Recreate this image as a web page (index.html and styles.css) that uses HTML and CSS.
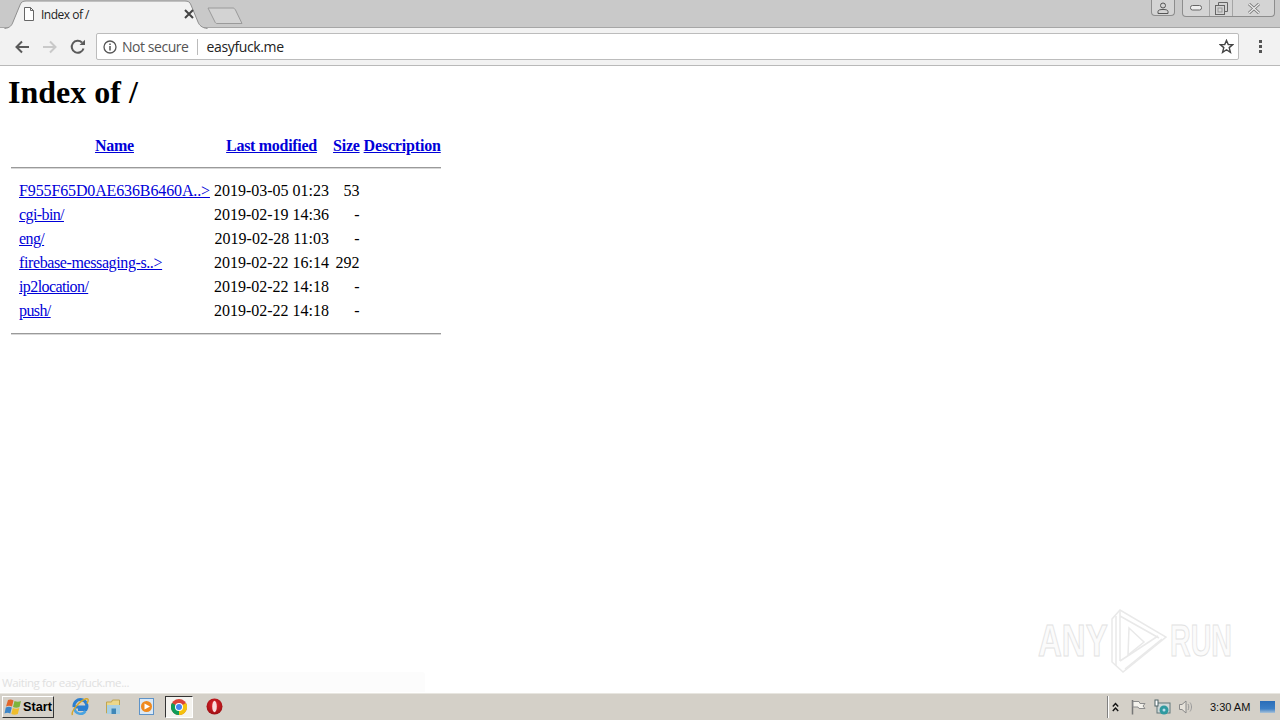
FILE: index.html
```html
<!DOCTYPE html>
<html lang="en">
<head>
<meta charset="utf-8">
<title>Index of /</title>
<link rel="stylesheet" href="styles.css">
</head>
<body>
<div class="window">
  <header class="tabstrip">
    <div class="tab">
      <svg class="tab-shape" width="204" height="29" viewBox="0 0 204 29"><path d="M0.5 28.500C6 28 8 25 9 22L16 5C17 2 19 1 22 1H181C184 1 186 2 187 5L194 22C195 25 198 28 203.500 28.500" fill="#f2f2f2" stroke="#8f8f8f"/></svg>
      <svg class="tab-favicon" width="12" height="14" viewBox="0 0 12 14"><path d="M1.500 .5H7.500L10.500 3.500V13.500H1.500ZM7.500 .5V3.500H10.500" fill="#fff" stroke="#666"/></svg>
      <span class="tab-title">Index of /</span>
      <svg class="tab-close" width="10" height="10" viewBox="0 0 10 10"><path d="M1 1L9 9M9 1L1 9" stroke="#444" stroke-width="2"/></svg>
    </div>
    <svg class="newtab" width="36" height="18" viewBox="0 0 36 18"><path d="M1 1H26C27 1 28 2 28.500 3L35 16.500H10C9 16.500 8.500 16 8 15Z" fill="#d3d3d3" stroke="#9a9a9a"/></svg>
    <div class="controls">
      <div class="ctl ctl-user"><svg width="12" height="12" viewBox="0 0 12 12"><circle cx="6" cy="3.500" r="2.500" fill="none" stroke="#555"/><path d="M1 11.500V9.500C1 8 3 7.500 6 7.500S11 8 11 9.500V11.500Z" fill="none" stroke="#555"/></svg></div>
      <div class="ctl-group">
        <div class="ctl ctl-min"><svg width="12" height="6" viewBox="0 0 12 6"><rect x=".5" y=".5" width="11" height="4.500" rx="2" fill="#eee" stroke="#666"/></svg></div>
        <div class="ctl ctl-max"><svg width="13" height="13" viewBox="0 0 13 13"><path d="M3.500 3V.5H12.500V9.500H10" fill="none" stroke="#666"/><rect x=".5" y="3.500" width="9" height="9" fill="none" stroke="#666"/><rect x="3" y="6" width="4" height="4" fill="none" stroke="#999"/></svg></div>
        <div class="ctl ctl-close"><svg width="14" height="11" viewBox="0 0 14 11"><path d="M2 1L12 10M12 1L2 10" stroke="#777" stroke-width="3"/><path d="M2 1L12 10M12 1L2 10" stroke="#eee" stroke-width="1.200"/></svg></div>
      </div>
    </div>
  </header>

  <nav class="toolbar">
    <svg class="nav-ico" width="16" height="14" viewBox="0 0 16 14"><path d="M15 7H3M8 1.500L2.500 7L8 12.500" fill="none" stroke="#5a5a5a" stroke-width="2"/></svg>
    <svg class="nav-ico nav-fwd" width="16" height="14" viewBox="0 0 16 14"><path d="M1 7H13M8 1.500L13.500 7L8 12.500" fill="none" stroke="#c9c9c9" stroke-width="2"/></svg>
    <svg class="nav-ico nav-reload" width="16" height="16" viewBox="0 0 16 16"><path d="M13.500 9.500A6 6 0 1 1 12 3.500" fill="none" stroke="#5a5a5a" stroke-width="2"/><path d="M9.500 6H15V.8Z" fill="#5a5a5a"/></svg>
    <div class="omnibox">
      <svg class="info" width="14" height="14" viewBox="0 0 14 14"><circle cx="7" cy="7" r="6" fill="none" stroke="#555" stroke-width="1.300"/><path d="M7 6V10.500M7 3.400V5" stroke="#555" stroke-width="1.500"/></svg>
      <span class="secure">Not secure</span>
      <span class="omni-sep"></span>
      <span class="url">easyfuck.me</span>
      <svg class="star" width="15" height="15" viewBox="0 0 16 16"><path d="M8 1.500L9.900 6H14.800L10.900 9.200L12.200 14.200L8 11.500L3.800 14.200L5.100 9.200L1.200 6H6.100Z" fill="none" stroke="#444" stroke-width="1.500"/></svg>
    </div>
    <div class="menu"><i></i><i></i><i></i></div>
  </nav>

  <main class="page">
    <h1>Index of /</h1>
    <table class="listing">
      <tr class="row head"><th class="ico"></th><th><a href="#">Name</a></th><th><a href="#" class="h-mod">Last modified</a></th><th><a href="#">Size</a></th><th><a href="#" class="h-desc">Description</a></th></tr>
      <tr><th colspan="5" class="rule"><hr></th></tr>
      <tr class="row"><td class="ico"></td><td><a href="#" class="n-caps">F955F65D0AE636B6460A..&gt;</a></td><td class="r">2019-03-05 01:23</td><td class="r">53</td><td></td></tr>
      <tr class="row"><td class="ico"></td><td><a href="#" class="n-low">cgi-bin/</a></td><td class="r">2019-02-19 14:36</td><td class="r">-</td><td></td></tr>
      <tr class="row"><td class="ico"></td><td><a href="#" class="n-low">eng/</a></td><td class="r">2019-02-28 11:03</td><td class="r">-</td><td></td></tr>
      <tr class="row"><td class="ico"></td><td><a href="#" class="n-long">firebase-messaging-s..&gt;</a></td><td class="r">2019-02-22 16:14</td><td class="r">292</td><td></td></tr>
      <tr class="row"><td class="ico"></td><td><a href="#" class="n-low">ip2location/</a></td><td class="r">2019-02-22 14:18</td><td class="r">-</td><td></td></tr>
      <tr class="row"><td class="ico"></td><td><a href="#" class="n-low">push/</a></td><td class="r">2019-02-22 14:18</td><td class="r">-</td><td></td></tr>
      <tr><th colspan="5" class="rule"><hr></th></tr>
    </table>
    <div class="status">Waiting for easyfuck.me...</div>
    <div class="watermark">
      <span class="wm-text wm-any">ANY</span>
      <svg class="wm-logo" width="62" height="64" viewBox="0 0 62 64"><g fill="none" stroke="#e9e9e9" stroke-width="1.500"><path d="M5 10L13 1L59 28L16 63L5 53Z"/><path d="M9 7V57M13 1V52M13 52L51 27M18 60L55 30M13 7L52 29"/><path d="M22 19L37 33L21 46Z"/></g></svg>
      <span class="wm-text wm-run">RUN</span>
    </div>
  </main>

  <footer class="taskbar">
    <button class="start">
      <svg width="18" height="17" viewBox="0 0 18 17"><path d="M4 2C6 1 8 1.500 9.500 2.500L8 8.500C6 7.500 4 7.500 2 8.500Z" fill="#e2662b"/><path d="M10.500 3C12.500 4 15 4 17 3L15.500 9C13.500 10 11 10 9 9Z" fill="#7db43c"/><path d="M1.800 9.500C4 8.500 6 8.500 7.800 9.500L6.300 15.500C4.500 14.500 2.500 14.500 .5 15.500Z" fill="#3c85c8"/><path d="M8.800 10C11 11 13 11 15.300 10L13.800 16C11.500 17 9.500 17 7.300 16Z" fill="#efbd2d"/></svg>
      <span>Start</span>
    </button>
    <div class="apps">
      <div class="app"><svg width="20" height="20" viewBox="0 0 20 20"><path d="M4 10A6.500 6.500 0 1 1 16 12.500H8M4.500 10H15.500" fill="none" stroke="#2b7fd0" stroke-width="3"/><path d="M4.500 11.500A6 6 0 0 0 15.500 14" fill="none" stroke="#4aa3e0" stroke-width="2.500"/><path d="M2.500 18C.5 15 9 4 16 1.800C19 1 18.500 4 17 6.500" fill="none" stroke="#d6a72c" stroke-width="1.500"/></svg></div>
      <div class="app"><svg width="17" height="17" viewBox="0 0 17 17"><path d="M1.500 4H6.500L7.500 2H14.500V15H1.500Z" fill="#ecd78a" stroke="#c0a550"/><rect x="2" y="7" width="13" height="9" fill="#a8d0e4"/><rect x="6.500" y="10.500" width="4.500" height="5.500" fill="#3f87b8"/></svg></div>
      <div class="app"><svg width="15" height="17" viewBox="0 0 15 17"><rect x=".5" y=".5" width="14" height="16" fill="#dbe9f6" stroke="#5e93c8"/><circle cx="7.500" cy="8.500" r="5.500" fill="#ef8a1f"/><path d="M5.500 5.500L11 8.500L5.500 11.500Z" fill="#fff"/></svg></div>
      <div class="app app-active"><svg width="16" height="16" viewBox="0 0 16 16"><circle cx="8" cy="8" r="8" fill="#db4437"/><path d="M8 8L15 4A8 8 0 0 1 8 16Z" fill="#f4c20d"/><path d="M8 8L8 16A8 8 0 0 1 1 4Z" fill="#0f9d58"/><circle cx="8" cy="8" r="4" fill="#fff"/><circle cx="8" cy="8" r="3" fill="#4285f4"/></svg></div>
      <div class="app"><svg width="17" height="17" viewBox="0 0 17 17"><defs><radialGradient id="opera" cx=".5" cy=".4" r=".6"><stop offset="0" stop-color="#e8262c"/><stop offset="1" stop-color="#9c0f14"/></radialGradient></defs><circle cx="8.500" cy="8.500" r="8" fill="url(#opera)"/><ellipse cx="8.500" cy="8.500" rx="2.300" ry="5.800" fill="#f9dcdc"/></svg></div>
    </div>
    <div class="tray">
      <svg width="7" height="10" viewBox="0 0 7 10"><path d="M.8 4.500L3.500 1.500L6.200 4.500M.8 9L3.500 6L6.200 9" fill="none" stroke="#111" stroke-width="1.400"/></svg>
      <svg class="tray-flag" width="16" height="16" viewBox="0 0 16 16"><path d="M2.500 1V15.500" stroke="#777" stroke-width="1.500"/><path d="M3 2.500H9L10 4.500H15L13 7L15 9.500H9L8 8H3Z" fill="#f4f2ec" stroke="#8c8c8c"/></svg>
      <svg class="tray-net" width="17" height="17" viewBox="0 0 17 17"><rect x="3" y="4" width="13" height="10" fill="#cfd8d8" stroke="#60777a"/><rect x="1" y="1" width="3" height="6" fill="#fff" stroke="#4d6266"/><circle cx="10" cy="11" r="4.500" fill="#2f9aa0"/><circle cx="10" cy="11" r="1.500" fill="#bde"/></svg>
      <svg class="tray-vol" width="16" height="16" viewBox="0 0 16 16"><path d="M1.500 5.500H4L8 2V14L4 10.500H1.500Z" fill="#e6e2da" stroke="#8a8a8a"/><path d="M10 5C11 6.500 11 9.500 10 11M12 3.500C14 6 14 10 12 12.500" fill="none" stroke="#9a9a9a"/></svg>
      <span class="clock">3:30 AM</span>
      <svg class="show-desk" width="15" height="12" viewBox="0 0 15 12"><defs><linearGradient id="desk" x1="0" y1="0" x2="0" y2="1"><stop offset="0" stop-color="#2a6db8"/><stop offset=".65" stop-color="#3c7fc6"/><stop offset="1" stop-color="#a9c2d8"/></linearGradient></defs><rect width="15" height="12" fill="url(#desk)"/></svg>
    </div>
  </footer>
</div>
</body>
</html>
```
FILE: styles.css
```css
* { box-sizing: border-box; }
html, body { margin: 0; height: 100%; overflow: hidden; }
body { font-family: "Liberation Serif", serif; color: #000; background: #fff; }
.window { display: flex; flex-direction: column; height: 720px; }

.tabstrip { display: flex; align-items: flex-start; height: 28px; padding-left: 4px; background: #c9c9c9; flex: none; position: relative; z-index: 1; border-bottom: 1px solid #a6a6a6; }
.tab { position: relative; width: 204px; height: 28px; display: flex; align-items: center; padding: 0 14px 0 19px; flex: none; }
.tab-shape { position: absolute; left: 0; top: 0; }
.tab-favicon, .tab-title, .tab-close { position: relative; }
.tab-title { margin-left: 6px; font: 12px "Open Sans", sans-serif; letter-spacing: -.5px; color: #222; flex: 1; }
.newtab { margin: 7px 0 0 -1px; flex: none; }
.controls { margin-left: auto; display: flex; align-items: flex-start; padding-right: 5px; gap: 7px; }
.ctl { display: flex; align-items: center; justify-content: center; height: 16px; }
.ctl-user, .ctl-group { background: #d4d4d4; border: 1px solid #8d8d8d; border-top: 0; border-radius: 0 0 4px 4px; }
.ctl-user { width: 24px; }
.ctl-group { display: flex; }
.ctl-min { width: 26px; }
.ctl-max { width: 24px; border-left: 1px solid #a5a5a5; border-right: 1px solid #a5a5a5; }
.ctl-close { width: 41px; }

.toolbar { display: flex; align-items: center; height: 38px; padding: 0 0 0 14px; background: #f2f2f2; border-bottom: 1px solid #b9b9b9; flex: none; }
.nav-fwd { margin-left: 12px; }
.nav-reload { margin-left: 12px; }
.omnibox { display: flex; align-items: center; width: 1143px; height: 27px; margin-left: 10px; padding: 0 4px 0 6px; background: #fff; border: 1px solid #bcbcbc; border-radius: 2px; }
.secure { margin-left: 5px; font: 14px "Open Sans", sans-serif; color: #555; letter-spacing: -.45px; }
.omni-sep { width: 1px; height: 16px; margin: 0 9px 0 8px; background: #bbb; }
.url { font: 14px "Open Sans", sans-serif; color: #222; letter-spacing: -.36px; flex: 1; }
.menu { display: flex; flex-direction: column; gap: 2px; margin-left: 20px; }
.menu i { display: block; width: 3px; height: 3px; background: #555; }

.page { flex: 1; position: relative; padding: 8px; background: #fff; }
h1 { margin: 0 0 21px; font-size: 32px; line-height: 37px; font-weight: bold; }
.listing { border-spacing: 2px; font-size: 16px; margin-top: 0; }
.listing td { padding: 1px; line-height: 18px; }
.listing th { padding: 2px 1px 0; line-height: 18px; }
.listing .row > * { height: 22px; }
.listing a { color: #0000d8; }
.head a { letter-spacing: -.25px; }
.head .h-mod { letter-spacing: -.3px; }
.head .h-desc { letter-spacing: -.18px; }
.n-caps { letter-spacing: -.13px; }
.n-low { letter-spacing: -.6px; }
.n-long { letter-spacing: -.39px; }
.ico { width: 6px; }
.r { text-align: right; }
.listing .rule { height: 20px; padding: 1px; }
hr { display: block; height: 2px; margin: 8px 0; border: 0; border-top: 1px solid #9a9a9a; border-bottom: 1px solid #d8d8d8; }

.status { position: absolute; left: 0; bottom: 0; width: 425px; height: 20px; padding: 3px 0 0 2px; background: #fcfcfc; border-radius: 0 3px 0 0; font: 11.500px "Open Sans", sans-serif; letter-spacing: -.4px; color: #e0e0e0; }
.watermark { position: absolute; left: 1038px; top: 543px; width: 196px; height: 64px; display: flex; align-items: center; }
.wm-text { font: bold 44px/64px "Liberation Sans", sans-serif; color: #fbfbfb; -webkit-text-stroke: 1px #e2e2e2; flex: none; width: 70px; transform-origin: 0 50%; }
.wm-any { transform: scaleX(.75); }
.wm-run { transform: scaleX(.65); width: 62px; margin-left: 1px; }
.wm-logo { flex: none; margin-left: -1px; }

.taskbar { display: flex; align-items: center; height: 28px; flex: none; background: #d4d0c8; border-top: 1px solid #fff; box-shadow: inset 0 1px 0 #e8e6e0; position: relative; padding: 0 0 0 2px; }
.start { display: flex; align-items: center; gap: 1px; width: 52px; height: 22px; padding: 0 0 0 1px; background: #d4d0c8; border: 1px solid; border-color: #fff #333 #333 #fff; font: bold 12.700px "Liberation Sans", sans-serif; color: #000; }
.apps { display: flex; align-items: center; margin-left: 9px; }
.app { display: flex; align-items: center; justify-content: center; width: 33.500px; height: 22px; }
.app-active { width: 28px; margin: 0 5px 0 1px; background: #f4f3ef; border: 1px solid; border-color: #333 #fff #fff #333; }
.tray { position: absolute; right: 0; top: 3px; height: 22px; width: 173px; display: flex; align-items: center; border-left: 1px solid #808080; padding-left: 4px; box-shadow: inset 1px 0 0 #fff; }
.tray-flag { margin-left: 11px; }
.tray-net { margin-left: 8px; }
.tray-vol { margin-left: 7px; }
.clock { margin-left: 16px; font: 11px "Liberation Sans", sans-serif; color: #111; white-space: nowrap; }
.show-desk { margin-left: 10px; }
```
